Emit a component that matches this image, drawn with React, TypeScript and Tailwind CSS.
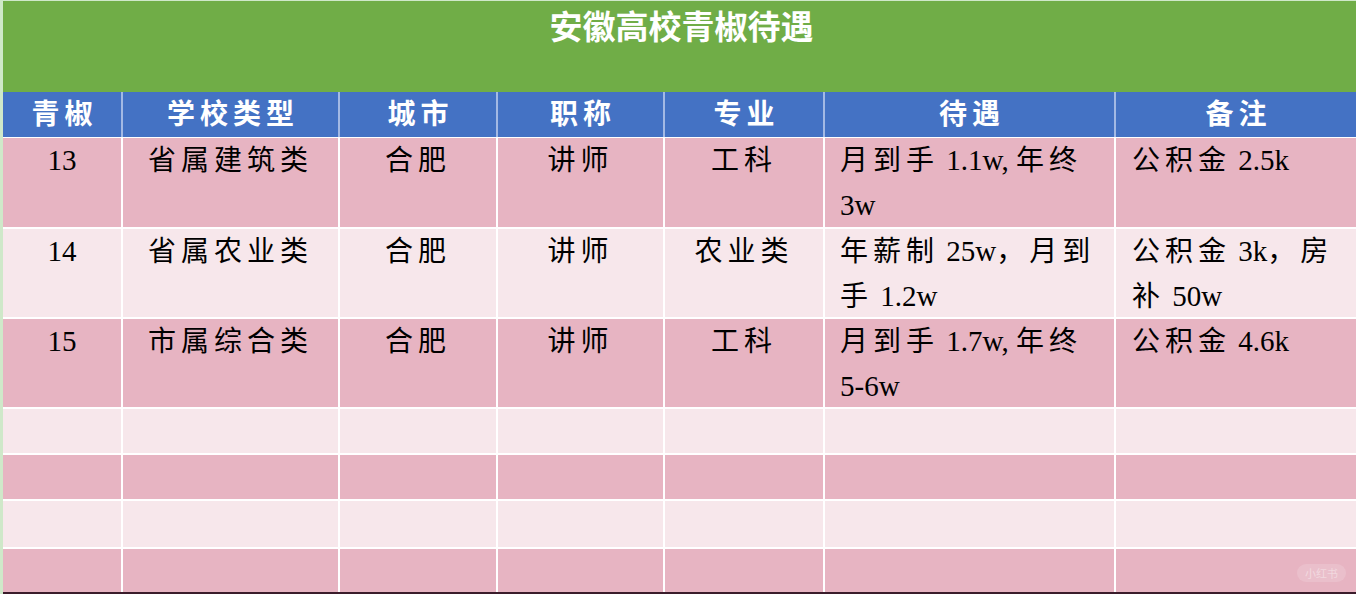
import React from "react";

const cols = "grid-cols-[118px_215px_156px_165px_158px_289px_240px]";

const headers = ["青椒", "学校类型", "城市", "职称", "专业", "待遇", "备注"];

// CJK runs get letter spacing, Latin runs keep their normal spacing
function T({ s }: { s: string }) {
  const parts = s.split(/([\u3000-\u9fff\uff00-\uffef]+)/).filter(Boolean);
  return (
    <>
      {parts.map((p, i) =>
        /[\u3000-\u9fff\uff00-\uffef]/.test(p) ? (
          <span key={i} className="tracking-[5px]">
            {p}
          </span>
        ) : (
          <span key={i} className="text-[29px]">
            {p}
          </span>
        )
      )}
    </>
  );
}

type Row = { cells: string[][]; tone: "dark" | "light" };

const rows: Row[] = [
  {
    tone: "dark",
    cells: [["13"], ["省属建筑类"], ["合肥"], ["讲师"], ["工科"], ["月到手 1.1w, 年终", "3w"], ["公积金 2.5k"]],
  },
  {
    tone: "light",
    cells: [["14"], ["省属农业类"], ["合肥"], ["讲师"], ["农业类"], ["年薪制 25w，月到", "手 1.2w"], ["公积金 3k，房", "补 50w"]],
  },
  {
    tone: "dark",
    cells: [["15"], ["市属综合类"], ["合肥"], ["讲师"], ["工科"], ["月到手 1.7w, 年终", "5-6w"], ["公积金 4.6k"]],
  },
  { tone: "light", cells: [[], [], [], [], [], [], []] },
  { tone: "dark", cells: [[], [], [], [], [], [], []] },
  { tone: "light", cells: [[], [], [], [], [], [], []] },
  { tone: "dark", cells: [[], [], [], [], [], [], []] },
];

export default function App() {
  return (
    <main className="relative w-[1356px] h-[594px] overflow-hidden bg-[#cfe8c9] pl-[3px] pt-[1px] font-['Liberation_Serif','Noto_Sans_CJK_SC',serif]">
      <div className="h-[91px] bg-[#70ad47] flex justify-center pt-[3px]">
        <h1 className="pl-[4px] text-[33px] leading-[42px] font-semibold text-white font-['Noto_Sans_CJK_SC','Noto_Sans',sans-serif]">
          安徽高校青椒待遇
        </h1>
      </div>

      <div className={`grid ${cols} gap-x-[2px] h-[45px] bg-[#a3b9e4]`}>
        {headers.map((h) => (
          <div
            key={h}
            className="bg-[#4472c4] flex items-center justify-center text-white text-[28px] font-bold tracking-[5px] indent-[5px]"
          >
            {h}
          </div>
        ))}
      </div>

      <div
        className={`grid ${cols} grid-rows-[89px_88px_88px_44px_44px_46px_43px] gap-[2px] bg-white pt-[1px] border-b-[2px] border-[#3b1c2b]`}
      >
        {rows.map((r, ri) =>
          r.cells.map((lines, ci) => (
            <div
              key={`${ri}-${ci}`}
              className={`${r.tone === "dark" ? "bg-[#e7b4c2]" : "bg-[#f7e7eb]"} text-black text-[28px] leading-[45px] whitespace-nowrap ${
                ci === 5 ? "pl-[15px]" : ci === 6 ? "pl-[16px]" : "text-center"
              }`}
            >
              {lines.map((l, li) => (
                <div key={li}>
                  <T s={l} />
                </div>
              ))}
            </div>
          ))
        )}
      </div>

      <div className="absolute right-[10px] bottom-[12px] rounded-full bg-white/15 px-[8px] py-[1px] text-[11px] text-white/40 font-['Noto_Sans_CJK_SC',sans-serif]">
        小红书
      </div>
    </main>
  );
}
